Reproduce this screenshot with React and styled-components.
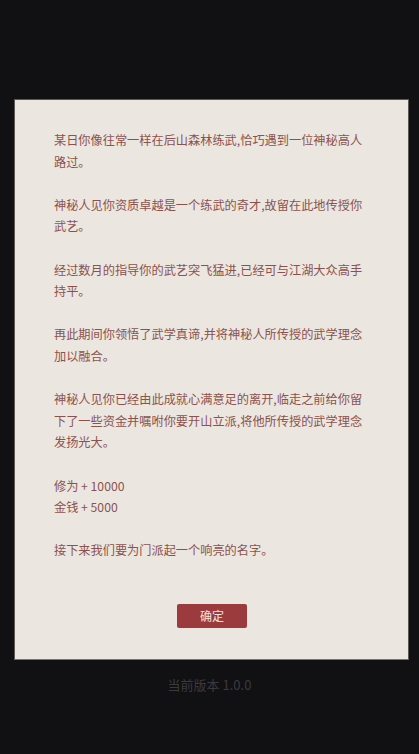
import React from "react";
import styled, { createGlobalStyle } from "styled-components";

const GlobalStyle = createGlobalStyle`
  html, body {
    margin: 0;
    padding: 0;
    background: #111114;
  }
  body {
    font-family: "Noto Sans CJK SC", "Noto Sans", sans-serif;
  }
`;

const Page = styled.div`
  min-height: 754px;
  padding-top: 99px;
  box-sizing: border-box;
  display: flex;
  flex-direction: column;
  align-items: stretch;
`;

const Panel = styled.div`
  margin: 0 10px 0 14px;
  background: #ece6e0;
  border: 1px solid #5e5955;
  border-bottom-color: #7a746e;
  padding: 30px 38px 31px 39px;
  display: flex;
  flex-direction: column;
`;

const Story = styled.div`
  width: 316px;
  color: #8b524d;
  font-size: 12.2px;
  line-height: 21.6px;
`;

const Paragraph = styled.p`
  margin: 0 0 ${(p) => (p.$last ? 0 : "21.6px")};
`;

const ButtonRow = styled.div`
  display: flex;
  justify-content: center;
  margin-top: 42px;
`;

const ConfirmButton = styled.button`
  width: 70px;
  height: 24px;
  border: none;
  border-radius: 2px;
  background: #9c3b3d;
  color: #f2e6e4;
  font-family: "Noto Sans CJK SC", sans-serif;
  font-size: 12px;
  padding: 0;
  cursor: pointer;
`;

const Version = styled.div`
  margin-top: 16px;
  text-align: center;
  color: #3a3a3e;
  font-size: 13px;
  line-height: 18px;
`;

const paragraphs = [
  ["某日你像往常一样在后山森林练武,恰巧遇到一位神秘高人路过。"],
  ["神秘人见你资质卓越是一个练武的奇才,故留在此地传授你武艺。"],
  ["经过数月的指导你的武艺突飞猛进,已经可与江湖大众高手持平。"],
  ["再此期间你领悟了武学真谛,并将神秘人所传授的武学理念加以融合。"],
  ["神秘人见你已经由此成就心满意足的离开,临走之前给你留下了一些资金并嘱咐你要开山立派,将他所传授的武学理念发扬光大。"],
  ["修为 + 10000", "金钱 + 5000"],
  ["接下来我们要为门派起一个响亮的名字。"],
];

export default function App() {
  return (
    <>
      <GlobalStyle />
      <Page>
        <Panel>
          <Story>
            {paragraphs.map((lines, i) => (
              <Paragraph key={i} $last={i === paragraphs.length - 1}>
                {lines.map((l, j) => (
                  <React.Fragment key={j}>
                    {j > 0 && <br />}
                    {l}
                  </React.Fragment>
                ))}
              </Paragraph>
            ))}
          </Story>
          <ButtonRow>
            <ConfirmButton>确定</ConfirmButton>
          </ButtonRow>
        </Panel>
        <Version>当前版本 1.0.0</Version>
      </Page>
    </>
  );
}
